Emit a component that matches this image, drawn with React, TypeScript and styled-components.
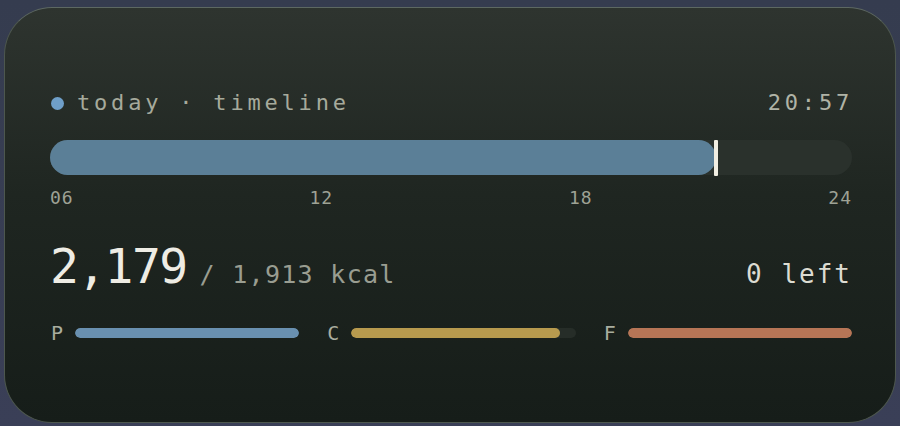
import styled, { createGlobalStyle } from 'styled-components';

const GlobalStyle = createGlobalStyle`
  html, body {
    margin: 0;
    padding: 0;
    background: #373e52;
  }
  * { box-sizing: border-box; }
`

const Page = styled.div`
  width: 900px;
  height: 426px;
  padding: 7px 4px 3px 4px;
  background: linear-gradient(180deg, #353c4f 0%, #3a3f57 100%);
  font-family: "DejaVu Sans Mono", "Liberation Mono", monospace;
`

const Card = styled.div`
  width: 892px;
  height: 416px;
  border-radius: 48px;
  border: 1px solid #4d574e;
  border-top-color: #5d6862;
  background: linear-gradient(180deg, #2e342f 0%, #1f2621 45%, #161d19 100%);
  padding: 83px 43px 0 45px;
  display: flex;
  flex-direction: column;
`

const Header = styled.div`
  display: flex;
  justify-content: space-between;
  align-items: center;
  height: 24px;
`

const Title = styled.div`
  display: flex;
  align-items: center;
  gap: 13px;
  padding-left: 1px;
`

const Dot = styled.span`
  width: 13px;
  height: 13px;
  border-radius: 50%;
  background: #6f9fc9;
`

const HeadText = styled.span<{ $color?: string }>`
  font-size: 22px;
  line-height: 24px;
  letter-spacing: 3.8px;
  color: ${p => p.$color || '#a6aa9c'};
`

const Clock = styled(HeadText)`
  margin-right: -1px;
`

const Track = styled.div`
  position: relative;
  margin-top: 25px;
  height: 35px;
  border-radius: 18px;
  background: #2a312c;
`

const Fill = styled.div`
  height: 100%;
  border-radius: 18px;
  background: #5b7f97;
`

const Marker = styled.div`
  position: absolute;
  top: 0;
  width: 4px;
  height: 36px;
  margin-left: -2px;
  background: #f1eee2;
  border-radius: 1px;
`

const Ticks = styled.div`
  display: flex;
  justify-content: space-between;
  margin-top: 13px;
`

const Tick = styled.span`
  font-size: 18px;
  line-height: 20px;
  letter-spacing: 1px;
  color: #9ea295;
`

const Totals = styled.div`
  display: flex;
  justify-content: space-between;
  align-items: baseline;
  margin-top: 30px;
  height: 56px;
`

const Eaten = styled.div`
  display: flex;
  align-items: baseline;
`

const Big = styled.span`
  font-size: 48px;
  line-height: 56px;
  letter-spacing: -1.6px;
  color: #eeece4;
`

const Goal = styled.span`
  margin-left: 13px;
  font-size: 25px;
  letter-spacing: 1.3px;
  color: #999d91;
`

const Left = styled.span`
  font-size: 26px;
  letter-spacing: 2px;
  color: #dcdcd2;
`

const Macros = styled.div`
  display: grid;
  grid-template-columns: repeat(3, 1fr);
  gap: 27px;
  margin-top: 29px;
`

const Macro = styled.div`
  display: flex;
  align-items: center;
  gap: 10px;
`

const MacroLabel = styled.span`
  width: 15px;
  padding-left: 1px;
  font-size: 20px;
  line-height: 20px;
  color: #a9ad9f;
`

const MacroTrack = styled.div`
  flex: 1;
  height: 10px;
  border-radius: 5px;
  background: #262d28;
  overflow: hidden;
`

const MacroFill = styled.div<{ $color: string }>`
  height: 100%;
  border-radius: 5px;
  background: ${p => p.$color};
`

const macros = [
  { label: 'P', color: '#6990b0', pct: 100 },
  { label: 'C', color: '#b79a4e', pct: 93 },
  { label: 'F', color: '#b67556', pct: 100 },
]

const start = 6
const end = 24
const now = 20 + 57 / 60

export default function App() {
  const pct = ((now - start) / (end - start)) * 100
  return (
    <>
      <GlobalStyle />
      <Page>
        <Card>
          <Header>
            <Title>
              <Dot />
              <HeadText>today · timeline</HeadText>
            </Title>
            <Clock $color="#b0b3a6">20:57</Clock>
          </Header>

          <Track>
            <Fill style={{ width: `${pct}%` }} />
            <Marker style={{ left: `${pct}%` }} />
          </Track>

          <Ticks>
            {['06', '12', '18', '24'].map(t => (
              <Tick key={t}>{t}</Tick>
            ))}
          </Ticks>

          <Totals>
            <Eaten>
              <Big>2,179</Big>
              <Goal>/ 1,913 kcal</Goal>
            </Eaten>
            <Left>0 left</Left>
          </Totals>

          <Macros>
            {macros.map(m => (
              <Macro key={m.label}>
                <MacroLabel>{m.label}</MacroLabel>
                <MacroTrack>
                  <MacroFill $color={m.color} style={{ width: `${m.pct}%` }} />
                </MacroTrack>
              </Macro>
            ))}
          </Macros>
        </Card>
      </Page>
    </>
  )
}
